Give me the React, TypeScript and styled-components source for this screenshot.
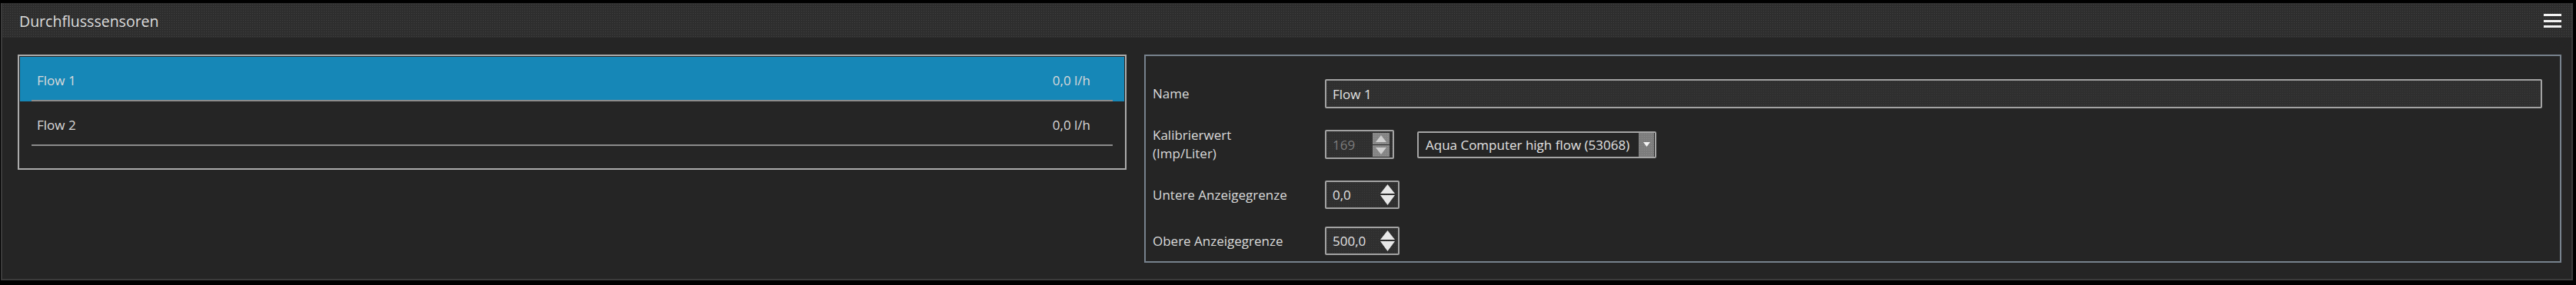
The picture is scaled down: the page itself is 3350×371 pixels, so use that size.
import React from "react"
import styled, { createGlobalStyle } from "styled-components"

const GlobalStyle = createGlobalStyle`
	html, body {
		margin: 0;
		padding: 0;
		background: #000;
	}
	body {
		font-family: "Open Sans", "Noto Sans", "Liberation Sans", sans-serif;
		color: #dadada;
	}
	* {
		box-sizing: border-box;
	}
`

const dots = (base: string, dot: string) => `
	background-color: ${base};
	background-image: radial-gradient(${dot} 0.7px, transparent 0.9px);
	background-size: 3px 3px;
`

interface Sensor {
	id: number
	name: string
	value: string
}

const sensors: Sensor[] = [
	{ id: 1, name: "Flow 1", value: "0,0 l/h" },
	{ id: 2, name: "Flow 2", value: "0,0 l/h" },
]

const Triangle: React.FC<{ up?: boolean; w: number; h: number; color: string }> = ({ up, w, h, color }) => (
	<svg width={w} height={h} viewBox={`0 0 ${w} ${h}`}>
		<polygon points={up ? `0,${h} ${w / 2},0 ${w},${h}` : `0,0 ${w},0 ${w / 2},${h}`} fill={color} />
	</svg>
)

const MenuIcon = () => (
	<svg width="23" height="19" viewBox="0 0 23 19">
		<rect x="0" y="0" width="23" height="3" fill="#f2f2f2" />
		<rect x="0" y="8" width="23" height="3" fill="#f2f2f2" />
		<rect x="0" y="15" width="23" height="3" fill="#f2f2f2" />
	</svg>
)

const SpinBox: React.FC<{ value: string; width: number; height: number; disabled?: boolean }> = ({
	value,
	width,
	height,
	disabled,
}) => (
	<SpinFrame $width={width} $height={height}>
		<SpinValue $disabled={disabled}>{value}</SpinValue>
		{disabled ? (
			<SpinButtonsDisabled>
				<SpinButtonDisabled>
					<Triangle up w={14} h={9} color="#cfcfcf" />
				</SpinButtonDisabled>
				<SpinButtonDisabled>
					<Triangle w={14} h={9} color="#cfcfcf" />
				</SpinButtonDisabled>
			</SpinButtonsDisabled>
		) : (
			<SpinButtons>
				<Triangle up w={19} h={12} color="#e8e8e8" />
				<Triangle w={19} h={13} color="#e8e8e8" />
			</SpinButtons>
		)}
	</SpinFrame>
)

export default function App() {
	return (
		<>
			<GlobalStyle />
			<Screen>
				<Panel>
					<TitleBar>
						<Title>Durchflusssensoren</Title>
						<MenuIcon />
					</TitleBar>
					<Body>
						<ListBox>
							{sensors.map((s) => (
								<ListItem key={s.id} $selected={s.id === 1}>
									<ItemRow>
										<span>{s.name}</span>
										<span>{s.value}</span>
									</ItemRow>
									<Separator />
								</ListItem>
							))}
						</ListBox>
						<DetailPanel>
							<Label>Name</Label>
							<TextInput>Flow 1</TextInput>

							<Label>
								Kalibrierwert
								<br />
								(Imp/Liter)
							</Label>
							<InlineGroup>
								<SpinBox value="169" width={90} height={38} disabled />
								<Combo>
									<ComboText>Aqua Computer high flow (53068)</ComboText>
									<ComboButton>
										<Triangle w={9} h={6} color="#f4f4f4" />
									</ComboButton>
								</Combo>
							</InlineGroup>

							<Label>Untere Anzeigegrenze</Label>
							<div>
								<SpinBox value="0,0" width={97} height={37} />
							</div>

							<Label>Obere Anzeigegrenze</Label>
							<div>
								<SpinBox value="500,0" width={97} height={37} />
							</div>
						</DetailPanel>
					</Body>
				</Panel>
			</Screen>
		</>
	)
}

const Screen = styled.div`
	width: 3350px;
	height: 371px;
	padding: 4px 4px 6px 1px;
`

const Panel = styled.div`
	height: 100%;
	display: flex;
	flex-direction: column;
	border: 2px solid #3b3b3b;
	border-top: none;
	background: #252525;
`

const TitleBar = styled.div`
	height: 45px;
	flex: none;
	display: flex;
	align-items: center;
	justify-content: space-between;
	padding: 2px 13px 0 22px;
	${dots("#2e2e2e", "rgba(255, 255, 255, 0.09)")}
`

const Title = styled.div`
	font-size: 19.5px;
	color: #dcdcdc;
`

const Body = styled.div`
	flex: 1;
	display: grid;
	grid-template-columns: 1442px 1fr;
	column-gap: 23px;
	align-items: start;
	padding: 22px 13px 0 20px;
`

const ListBox = styled.div`
	height: 150px;
	border: 2px solid #ababab;
	padding: 1px;
`

const ListItem = styled.div<{ $selected?: boolean }>`
	background: ${(p) => (p.$selected ? "#1687b7" : "transparent")};
`

const ItemRow = styled.div`
	height: 56px;
	display: flex;
	align-items: center;
	justify-content: space-between;
	padding: 4px 44px 0 22px;
	font-size: 17px;
	color: #dadada;
`

const Separator = styled.div`
	height: 2px;
	margin: 0 15px;
	background: #8c8c8c;
`

const DetailPanel = styled.div`
	height: 271px;
	border: 2px solid #77828d;
	padding: 30px 23px 0 9px;
	display: grid;
	grid-template-columns: 224px 1fr;
	row-gap: 23px;
	align-items: center;
	align-content: start;
`

const Label = styled.div`
	font-size: 17px;
	line-height: 24px;
	color: #dadada;
`

const TextInput = styled.div`
	height: 38px;
	display: flex;
	align-items: center;
	padding: 0 8px;
	border: 2px solid #a3a3a3;
	border-radius: 2px;
	font-size: 17px;
	color: #e2e2e2;
	${dots("#2f2f2f", "rgba(255, 255, 255, 0.05)")}
`

const InlineGroup = styled.div`
	display: flex;
	align-items: center;
	gap: 30px;
`

const SpinFrame = styled.div<{ $width: number; $height: number }>`
	width: ${(p) => p.$width}px;
	height: ${(p) => p.$height}px;
	display: flex;
	align-items: center;
	justify-content: space-between;
	padding: 0 2px 0 8px;
	border: 2px solid #a3a3a3;
	border-radius: 2px;
	font-size: 17px;
	${dots("#2f2f2f", "rgba(255, 255, 255, 0.05)")}
`

const SpinValue = styled.span<{ $disabled?: boolean }>`
	color: ${(p) => (p.$disabled ? "#7c7c7c" : "#e2e2e2")};
`

const SpinButtons = styled.div`
	display: flex;
	flex-direction: column;
	gap: 2px;
	padding-right: 2px;
`

const SpinButtonsDisabled = styled.div`
	display: flex;
	flex-direction: column;
	gap: 1px;
	padding-right: 2px;
`

const SpinButtonDisabled = styled.div`
	width: 22px;
	height: 15px;
	display: flex;
	align-items: center;
	justify-content: center;
	${dots("#858585", "rgba(255, 255, 255, 0.12)")}
`

const Combo = styled.div`
	width: 311px;
	height: 35px;
	display: flex;
	align-items: stretch;
	justify-content: space-between;
	border: 2px solid #a5a5a5;
	border-radius: 2px;
	background: #252525;
`

const ComboText = styled.span`
	display: flex;
	align-items: center;
	padding-left: 9px;
	font-size: 17px;
	color: #e2e2e2;
	white-space: nowrap;
`

const ComboButton = styled.div`
	width: 20px;
	margin-right: 1px;
	display: flex;
	align-items: center;
	justify-content: center;
	${dots("#7d7d7d", "rgba(255, 255, 255, 0.12)")}
`
